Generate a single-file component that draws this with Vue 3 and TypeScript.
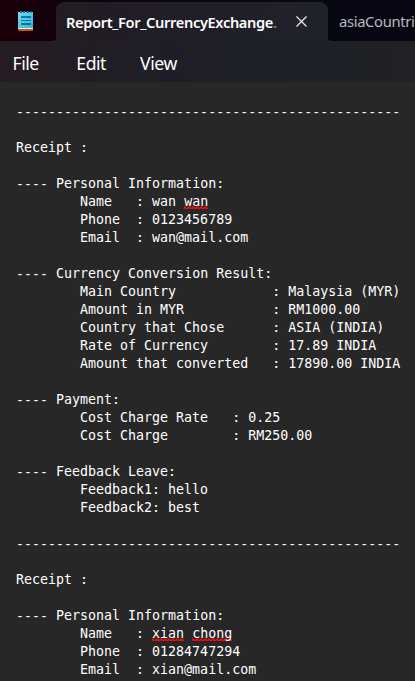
<script setup lang="ts">
interface Part {
  text: string
  misspelled?: boolean
}

const menus: string[] = ['File', 'Edit', 'View']
const rule = '-'.repeat(48)

// Misspelled words are wrapped in tildes.
const lines: string[] = [
  '',
  rule,
  '',
  'Receipt :',
  '',
  '---- Personal Information:',
  '        Name   : wan ~wan~',
  '        Phone  : 0123456789',
  '        Email  : wan@mail.com',
  '',
  '---- Currency Conversion Result:',
  '        Main Country            : Malaysia (MYR)',
  '        Amount in MYR           : RM1000.00',
  '        Country that Chose      : ASIA (INDIA)',
  '        Rate of Currency        : 17.89 INDIA',
  '        Amount that converted   : 17890.00 INDIA',
  '',
  '---- Payment:',
  '        Cost Charge Rate   : 0.25',
  '        Cost Charge        : RM250.00',
  '',
  '---- Feedback Leave:',
  '        Feedback1: hello',
  '        Feedback2: best',
  '',
  rule,
  '',
  'Receipt :',
  '',
  '---- Personal Information:',
  '        Name   : ~xian~ ~chong~',
  '        Phone  : 01284747294',
  '        Email  : xian@mail.com',
]

const parsed: Part[][] = lines.map((line) =>
  line
    .split(/(~[^~]+~|-{4,})/)
    .filter((text) => text.length > 0)
    .map((text) => ({ text: text.replace(/~/g, ''), misspelled: text.startsWith('~') })),
)

const isDashes = (text: string): boolean => text.startsWith('----')
</script>

<template>
  <div class="window">
    <header class="tabs">
      <div class="app-icon">
        <svg width="16" height="21" viewBox="0 0 16 21">
          <defs>
            <linearGradient id="paper" x1="0" y1="0" x2="1" y2="1">
              <stop offset="0" stop-color="#7bdcf3" />
              <stop offset="1" stop-color="#35b1da" />
            </linearGradient>
          </defs>
          <rect x="0.5" y="17" width="14.5" height="3" rx="0.5" fill="#b85b0c" />
          <rect x="0" y="17" width="15" height="1" fill="#f3eee6" />
          <rect x="0" y="1" width="15" height="16" fill="url(#paper)" />
          <path d="M2 0h2v2H2zM5 0h2v2H5zM9 0h1.500v2H9zM12 0h1.500v2H12z" fill="#087493" />
          <path d="M3 5h10v2H3zM3 9h10v1H3zM3 12h10v2H3z" fill="#08799e" />
        </svg>
      </div>
      <div class="tab active">
        <span class="title">Report_For_CurrencyExchange<span class="fade">.</span></span>
        <svg class="close" width="11" height="11" viewBox="0 0 11 11">
          <path d="M0.500 0.500l10 10M10.500 0.500l-10 10" stroke="#eeeeee" stroke-width="1.200" fill="none" />
        </svg>
      </div>
      <div class="tab other"><span class="other-title">asiaCountri</span></div>
    </header>
    <nav class="menu">
      <span v-for="m in menus" :key="m" class="menu-item">{{ m }}</span>
    </nav>
    <main class="editor">
      <div v-for="(parts, i) in parsed" :key="i" class="line">
        <template v-for="(p, j) in parts" :key="j"><span v-if="p.misspelled" class="bad">{{ p.text }}<svg class="squiggle" width="100%" height="3"><defs><pattern :id="`wave-${i}-${j}`" width="4" height="3" patternUnits="userSpaceOnUse"><path d="M-1 3L1 1L3 3L5 1" stroke="#ff0808" stroke-width="1.500" fill="none" /></pattern></defs><rect width="100%" height="3" :fill="`url(#wave-${i}-${j})`" /></svg></span><span v-else :class="{ dashes: isDashes(p.text) }">{{ p.text }}</span></template>
      </div>
    </main>
  </div>
</template>

<style>
body {
  background: #272727;
}
</style>

<style scoped>
.window {
  width: 415px;
  height: 681px;
  overflow: hidden;
  display: flex;
  flex-direction: column;
  background: linear-gradient(90deg, #251c22 0, #1e1e28 45%, #1c2028 70%, #212126 100%);
  font-family: 'Noto Sans', 'Open Sans', sans-serif;
}
.tabs {
  display: flex;
  flex: none;
  height: 41px;
}
.app-icon {
  box-sizing: border-box;
  flex: none;
  width: 56px;
  padding: 11px 0 0 18px;
  background: linear-gradient(90deg, #1b0007, #14000e);
  border-bottom-right-radius: 4px;
}
.app-icon svg {
  display: block;
}
.tab {
  box-sizing: border-box;
  white-space: nowrap;
}
.active {
  position: relative;
  display: flex;
  flex: none;
  align-items: center;
  width: 272px;
  padding-left: 10px;
  padding-top: 2px;
  background: linear-gradient(90deg, #110010, #070713);
}
.active::before {
  content: '';
  position: absolute;
  inset: 2px 0 0;
  border-radius: 8px 8px 0 0;
  background: linear-gradient(90deg, #231c23, #1f1e27 50%, #20222a);
}
.title {
  position: relative;
  width: 212px;
  color: #fff;
  font-size: 14.600px;
  font-weight: 600;
  letter-spacing: -0.340px;
  line-height: 22px;
}
.fade {
  color: #85858a;
}
.close {
  position: relative;
  margin-left: 18px;
}
.other {
  flex: 1;
  min-width: 0;
  padding: 10px 0 0 11px;
  background: #070713;
  border-bottom-left-radius: 4px;
  color: #b9b9bd;
}
.other-title {
  display: block;
  font-size: 14.800px;
  letter-spacing: -0.350px;
  line-height: 22px;
}
.menu {
  display: flex;
  flex: none;
  box-sizing: border-box;
  height: 41px;
  padding: 9px 0 0 12.500px;
  color: #fff;
  font-size: 17.600px;
  letter-spacing: -0.450px;
  line-height: 26px;
}
.menu-item {
  width: 63.800px;
}
.editor {
  flex: 1;
  padding-top: 3px;
  padding-left: 16px;
  background: #272727;
  color: #fff;
  font-family: 'DejaVu Sans Mono', monospace;
  font-size: 13.300px;
  overflow: hidden;
}
.line {
  position: relative;
  z-index: 0;
  height: 18px;
  line-height: 18px;
  white-space: pre;
}
.dashes {
  position: relative;
  top: 1px;
}
.bad {
  position: relative;
}
.squiggle {
  position: absolute;
  z-index: -1;
  left: 0;
  bottom: 0;
}
</style>
